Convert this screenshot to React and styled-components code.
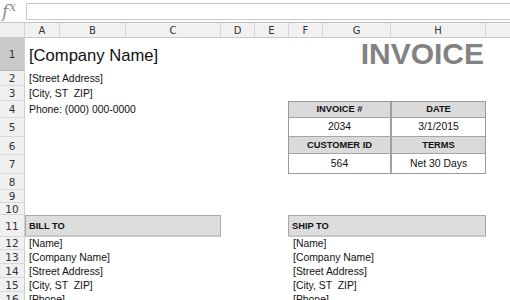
import React from 'react';
import styled, { createGlobalStyle } from 'styled-components';

const GlobalStyle = createGlobalStyle`
  html, body {
    margin: 0;
    padding: 0;
    background: #ffffff;
    overflow: hidden;
  }
  body {
    font-family: "Liberation Sans", Arial, sans-serif;
    color: #111;
  }
`;

const COLS = [
  { key: 'A', width: 35 },
  { key: 'B', width: 66 },
  { key: 'C', width: 95 },
  { key: 'D', width: 34 },
  { key: 'E', width: 34 },
  { key: 'F', width: 34 },
  { key: 'G', width: 68 },
  { key: 'H', width: 95 },
  { key: 'I', width: 60 },
];

const ROWS = [33, 15, 15, 17, 19, 18, 19, 16, 13, 12, 22, 13, 14, 14, 14, 14];

const Page = styled.div`
  width: 510px;
  height: 300px;
  overflow: hidden;
  display: flex;
  flex-direction: column;
`;

const FormulaBar = styled.div`
  display: flex;
  height: 23px;
  flex-shrink: 0;
  box-sizing: border-box;
  border-bottom: 1px solid #c4c4c4;
`;

const FxLabel = styled.div`
  width: 25px;
  font-family: "DejaVu Serif", "Liberation Serif", serif;
  font-style: italic;
  color: #8e8e8e;
  font-size: 17px;
  line-height: 22px;
  padding-left: 2px;
  box-sizing: border-box;
  white-space: nowrap;

  sup {
    font-size: 12px;
    vertical-align: 6px;
    line-height: 0;
    margin-left: 1px;
  }
`;

const FormulaInput = styled.div`
  flex: 1;
  margin: 3px 0 2px 1px;
  border: 1px solid #c8c8c8;
  border-right: none;
  background: #fff;
`;

const Sheet = styled.div`
  display: grid;
  grid-template-columns: 25px ${COLS.map((c) => `${c.width}px`).join(' ')};
  grid-template-rows: 15px ${ROWS.map((h) => `${h}px`).join(' ')};
`;

const Corner = styled.div`
  grid-column: 1;
  grid-row: 1;
  background: #efefef;
  border-bottom: 1px solid #cacaca;
  border-right: 1px solid #d4d4d4;
`;

const ColHeader = styled.div`
  grid-row: 1;
  background: #f1f1f1;
  border-bottom: 1px solid #cacaca;
  border-right: 1px solid #d6d6d6;
  display: flex;
  align-items: center;
  justify-content: center;
  font-family: "DejaVu Sans", "Liberation Sans", sans-serif;
  font-size: 10px;
  color: #333;
  box-sizing: border-box;
`;

const RowHeader = styled.div`
  grid-column: 1;
  background: ${({ $active }) => ($active ? '#c9c9c9' : '#f0f0f0')};
  border-bottom: 1px solid ${({ $active }) => ($active ? '#b8b8b8' : '#d8d8d8')};
  border-right: 1px solid #cfcfcf;
  display: flex;
  align-items: center;
  justify-content: center;
  font-family: "DejaVu Sans", "Liberation Sans", sans-serif;
  font-size: 10.5px;
  color: #333;
  box-sizing: border-box;
`;

const Cell = styled.div`
  display: flex;
  align-items: ${({ $align }) => $align || 'center'};
  justify-content: ${({ $right }) => ($right ? 'flex-end' : 'flex-start')};
  padding: 0 3px 0 4px;
  font-size: 10.4px;
  color: #111;
  white-space: pre;
  min-width: 0;
`;

const CompanyName = styled.span`
  font-size: 16.6px;
  line-height: 1;
  padding-bottom: 6px;
`;

const InvoiceTitle = styled.span`
  font-size: 30px;
  font-weight: bold;
  color: #828282;
  line-height: 1;
  padding-bottom: 2px;
  margin-right: -1px;
`;

const InfoTable = styled.div`
  display: grid;
  grid-template-columns: 103px 1fr;
  grid-template-rows: 16fr 19fr 18fr 19fr;
  margin-left: -1px;
  border: 1px solid #9a9a9a;
  box-sizing: border-box;
`;

const InfoCell = styled.div`
  display: flex;
  align-items: center;
  justify-content: center;
  background: ${({ $head }) => ($head ? '#dadada' : '#ffffff')};
  font-size: ${({ $head }) => ($head ? '9.3px' : '10.4px')};
  font-weight: ${({ $head }) => ($head ? 'bold' : 'normal')};
  color: #111;
  border-bottom: ${({ $last }) => ($last ? 'none' : '1px solid #a4a4a4')};
  border-right: ${({ $left }) => ($left ? '2px solid #a0a0a0' : 'none')};
`;

const SectionBar = styled.div`
  display: flex;
  align-items: center;
  padding-left: 3px;
  background: #dddddd;
  border: 1px solid #a8a8a8;
  border-bottom: 2px solid #c8c8c8;
  font-size: 9.3px;
  font-weight: bold;
  color: #111;
  margin-left: ${({ $shift }) => $shift || 0}px;
`;

const place = (col, row, span = 1, rowSpan = 1) => ({
  gridColumn: `${col + 2} / span ${span}`,
  gridRow: `${row + 1} / span ${rowSpan}`,
});

const colIndex = (k) => COLS.findIndex((c) => c.key === k);

const addressLines = ['[Street Address]', '[City, ST  ZIP]', 'Phone: (000) 000-0000'];
const partyLines = ['[Name]', '[Company Name]', '[Street Address]', '[City, ST  ZIP]', '[Phone]'];

const infoRows = [
  { head: true, a: 'INVOICE #', b: 'DATE' },
  { head: false, a: '2034', b: '3/1/2015' },
  { head: true, a: 'CUSTOMER ID', b: 'TERMS' },
  { head: false, a: '564', b: 'Net 30 Days' },
];

export default function App() {
  return (
    <Page>
      <GlobalStyle />
      <FormulaBar>
        <FxLabel>
          f<sup>x</sup>
        </FxLabel>
        <FormulaInput />
      </FormulaBar>
      <Sheet>
        <Corner />
        {COLS.map((c, i) => (
          <ColHeader key={c.key} style={{ gridColumn: i + 2 }}>
            {c.key}
          </ColHeader>
        ))}
        {ROWS.map((_, i) => (
          <RowHeader key={i} $active={i === 0} style={{ gridRow: i + 2 }}>
            {i + 1}
          </RowHeader>
        ))}

        <Cell $align="flex-end" style={place(0, 1, 4)}>
          <CompanyName>[Company Name]</CompanyName>
        </Cell>
        <Cell $align="flex-end" $right style={place(colIndex('F'), 1, 3)}>
          <InvoiceTitle>INVOICE</InvoiceTitle>
        </Cell>

        {addressLines.map((t, i) => (
          <Cell key={t} style={place(0, i + 2, 3)}>
            {t}
          </Cell>
        ))}

        <InfoTable style={place(colIndex('F'), 4, 3, 4)}>
          {infoRows.map((r, i) => (
            <React.Fragment key={i}>
              <InfoCell $head={r.head} $left $last={i === infoRows.length - 1}>
                {r.a}
              </InfoCell>
              <InfoCell $head={r.head} $last={i === infoRows.length - 1}>
                {r.b}
              </InfoCell>
            </React.Fragment>
          ))}
        </InfoTable>

        <SectionBar style={place(0, 11, 3)}>BILL TO</SectionBar>
        <SectionBar $shift={-1} style={place(colIndex('F'), 11, 3)}>SHIP TO</SectionBar>

        {partyLines.map((t, i) => (
          <React.Fragment key={i}>
            <Cell style={place(0, 12 + i, 3)}>{t}</Cell>
            <Cell style={place(colIndex('F'), 12 + i, 3)}>{t}</Cell>
          </React.Fragment>
        ))}
      </Sheet>
    </Page>
  );
}
